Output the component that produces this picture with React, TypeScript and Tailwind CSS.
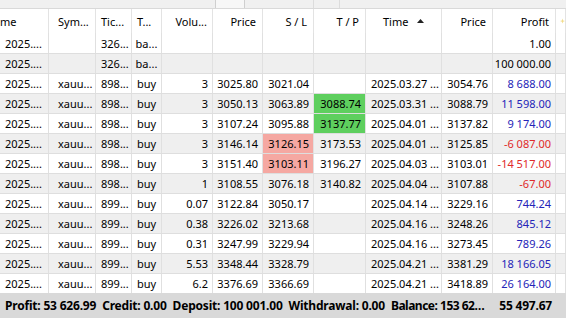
import React from "react";

type Cell = { t: string; c?: "blue" | "red"; bg?: "green" | "red" };
type Row = Cell[];

const widths = [49, 47, 36, 30, 51, 50, 51, 52, 76, 51, 63, 10];
const aligns = ["left", "left", "left", "center", "right", "right", "right", "right", "left", "right", "right", "left"];

const mk = (
  tk: string,
  vol: string,
  price: string,
  sl: string,
  tp: string,
  time: string,
  cp: string,
  profit: string,
  opts: { tpg?: boolean; slr?: boolean; neg?: boolean } = {}
): Row => [
  { t: "2025...." },
  { t: "xauu..." },
  { t: tk },
  { t: "buy" },
  { t: vol },
  { t: price },
  { t: sl, bg: opts.slr ? "red" : undefined },
  { t: tp, bg: opts.tpg ? "green" : undefined },
  { t: time },
  { t: cp },
  { t: profit, c: opts.neg ? "red" : "blue" },
  { t: "" },
];

const rows: Row[] = [
  [{ t: "2025...." }, { t: "" }, { t: "326..." }, { t: "ba..." }, { t: "" }, { t: "" }, { t: "" }, { t: "" }, { t: "" }, { t: "" }, { t: "1.00" }, { t: "" }],
  [{ t: "2025...." }, { t: "" }, { t: "326..." }, { t: "ba..." }, { t: "" }, { t: "" }, { t: "" }, { t: "" }, { t: "" }, { t: "" }, { t: "100 000.00" }, { t: "" }],
  mk("898...", "3", "3025.80", "3021.04", "", "2025.03.27 ...", "3054.76", "8 688.00"),
  mk("898...", "3", "3050.13", "3063.89", "3088.74", "2025.03.31 ...", "3088.79", "11 598.00", { tpg: true }),
  mk("898...", "3", "3107.24", "3095.88", "3137.77", "2025.04.01 ...", "3137.82", "9 174.00", { tpg: true }),
  mk("898...", "3", "3146.14", "3126.15", "3173.53", "2025.04.01 ...", "3125.85", "-6 087.00", { slr: true, neg: true }),
  mk("898...", "3", "3151.40", "3103.11", "3196.27", "2025.04.03 ...", "3103.01", "-14 517.00", { slr: true, neg: true }),
  mk("898...", "1", "3108.55", "3076.18", "3140.82", "2025.04.04 ...", "3107.88", "-67.00", { neg: true }),
  mk("899...", "0.07", "3122.84", "3050.17", "", "2025.04.14 ...", "3229.16", "744.24"),
  mk("899...", "0.38", "3226.02", "3213.68", "", "2025.04.16 ...", "3248.26", "845.12"),
  mk("899...", "0.31", "3247.99", "3229.94", "", "2025.04.16 ...", "3273.45", "789.26"),
  mk("899...", "5.53", "3348.44", "3328.79", "", "2025.04.21 ...", "3381.29", "18 166.05"),
  mk("899...", "6.2", "3376.69", "3366.69", "", "2025.04.21 ...", "3418.89", "26 164.00"),
];

const headers = ["me", "Sym...", "Tic...", "T...", "Volu...", "Price", "S / L", "T / P", "Time", "Price", "Profit", ""];

const alignClass = (a: string) =>
  a === "right" ? "justify-end pr-[4px]" : a === "center" ? "justify-center" : "justify-start pl-[5px]";

export default function App() {
  return (
    <div
      className="w-[566px] h-[318px] overflow-hidden bg-white text-black flex flex-col"
      style={{ fontFamily: '"Noto Sans", "Open Sans", sans-serif' }}
    >
      {/* top strip */}
      <div className="h-[9px] bg-[#f0f0f0] border-b border-[#d9d9d9] flex">
        <div className="w-[215px]" />
        <div className="w-[30px] border-x border-[#cfcfcf] bg-[#f7f7f7]" />
        <div className="w-[68px]" />
        <div className="w-[27px] border-x border-[#dcdcdc]" />
        <div className="flex-1" />
      </div>
      {/* header */}
      <div className="h-[24px] flex text-[11px] leading-none">
        {headers.map((h, i) => {
          let cls = "";
          if (i === 0) cls = "justify-start pl-0";
          else if (i === 1) cls = "justify-start pl-[9px]";
          else if (i === 2) cls = "justify-start pl-[5px]";
          else if (i === 3) cls = "justify-start pl-[5px]";
          else if (i === 4) cls = "justify-end pr-[5px]";
          else if (i === 8) cls = "justify-start pl-[17px]";
          else if (i === 11) cls = "justify-start pl-[4px]";
          else cls = "justify-end pr-[6px]";
          return (
            <div
              key={i}
              className={`h-full flex items-center border-r border-[#e3e3e3] relative ${cls}`}
              style={{ width: widths[i] }}
            >
              {i === 11 ? (
                <svg width="8" height="8" viewBox="0 0 8 8">
                  <path d="M4 0 L5 3 L8 4 L5 5 L4 8 L3 5 L0 4 L3 3 Z" fill="#f2dc8a" />
                </svg>
              ) : (
                <span className="whitespace-nowrap">{h}</span>
              )}
              {i === 8 && (
                <svg className="absolute right-[17px] top-[10px]" width="7" height="4" viewBox="0 0 7 4">
                  <path d="M0 4 L3.5 0 L7 4 Z" fill="#222" />
                </svg>
              )}
            </div>
          );
        })}
      </div>
      {/* rows */}
      <div className="flex flex-col">
        {rows.map((r, ri) => (
          <div
            key={ri}
            className={`h-[20px] flex text-[11px] leading-none ${ri % 2 === 1 ? "bg-[#efefef]" : "bg-white"} ${
              ri === 0 ? "" : "border-t border-[#dedede]"
            }`}
          >
            {r.map((c, ci) => (
              <div
                key={ci}
                className={`h-full flex items-center border-r border-[#e0e0e0] whitespace-nowrap ${alignClass(aligns[ci])} ${
                  ci === 1 ? "pl-[9px]" : ""
                } ${c.bg === "green" ? "bg-[#5ecf5e]" : c.bg === "red" ? "bg-[#f5a8a2]" : ""} ${
                  c.c === "blue" ? "text-[#2424b8]" : c.c === "red" ? "text-[#e02a2a]" : "text-black"
                }`}
                style={{ width: widths[ci] }}
              >
                {c.t}
              </div>
            ))}
          </div>
        ))}
      </div>
      {/* footer */}
      <div className="flex-1 bg-[#d9d9d9] flex items-center text-[12px] font-bold leading-none whitespace-nowrap tracking-[-0.2px]">
        <div className="w-[556px] pl-[5px] pr-[4px] flex items-center">
          <div className="flex gap-[6px]">
            <span>Profit: 53 626.99</span>
            <span>Credit: 0.00</span>
            <span>Deposit: 100 001.00</span>
            <span>Withdrawal: 0.00</span>
            <span className="tracking-[-0.5px]">Balance: 153 62…</span>
          </div>
          <span className="ml-auto">55 497.67</span>
        </div>
      </div>
    </div>
  );
}
